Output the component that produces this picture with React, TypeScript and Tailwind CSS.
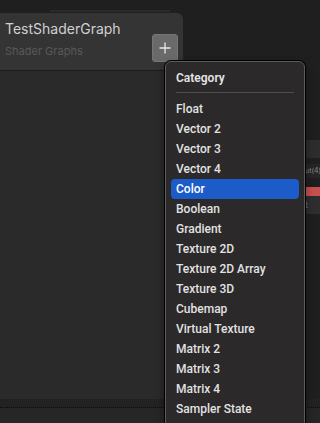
import React from "react";

const items = [
  "Float",
  "Vector 2",
  "Vector 3",
  "Vector 4",
  "Color",
  "Boolean",
  "Gradient",
  "Texture 2D",
  "Texture 2D Array",
  "Texture 3D",
  "Cubemap",
  "Virtual Texture",
  "Matrix 2",
  "Matrix 3",
  "Matrix 4",
  "Sampler State",
];

export default function App() {
  return (
    <div
      className="relative w-[320px] h-[423px] overflow-hidden bg-[#1f1f1f]"
      style={{ fontFamily: "Inter, 'Noto Sans', sans-serif" }}
    >
      {/* top strip */}
      <div className="h-[13px] pt-[10px] pl-[50px]">
        <div className="w-[120px] h-[2px] bg-[#2a2a2a]" />
      </div>

      {/* blackboard panel header */}
      <div className="w-[183px] h-[58px] bg-[#343434] rounded-tr-[6px] border-b border-[#1c1c1c] flex justify-between pl-[5px] pr-[5px]">
        <div className="flex flex-col pt-[6px]">
          <div className="text-[14px] leading-[20px] text-[#d0d0d0]">TestShaderGraph</div>
          <div className="text-[11px] leading-[14px] text-[#595959] mt-[5px]">Shader Graphs</div>
        </div>
        <div className="mt-[21px] w-[26px] h-[28px] rounded-[3px] bg-[#6a6a6a] border border-[#767676] flex items-center justify-center">
          <svg width="12" height="12" viewBox="0 0 12 12">
            <path d="M6 0.5v11M0.5 6h11" stroke="#e8e8e8" strokeWidth="1.3" />
          </svg>
        </div>
      </div>

      {/* blackboard body */}
      <div className="w-[183px] h-[328px] bg-[#2a2a2a]" />
      <div className="w-[320px] h-[9px] bg-[#222222] border-b border-dotted border-[#0c0c0c]" />
      <div className="w-[320px] h-[15px] bg-[#262626]" />

      {/* right-side node fragments on canvas */}
      <div className="absolute left-[305px] top-[140px] w-[15px] flex flex-col">
        <div className="h-[18px] bg-[#2d2d2d]" />
        <div className="h-[6px] bg-[#1f1f1f]" />
        <div className="h-[14px] bg-[#262626] text-[7px] leading-[14px] text-[#8a8a8a] whitespace-nowrap">ut(4)</div>
        <div className="h-[9px] bg-[#1f1f1f]" />
        <div className="h-[9px] bg-[#c85050]" />
        <div className="h-[18px] bg-[#2e2e2e] text-[9px] leading-[18px] text-[#777] whitespace-nowrap">t</div>
      </div>

      {/* dropdown menu */}
      <div
        className="absolute left-[165px] top-[61px] w-[140px] h-[380px] rounded-[6px] bg-[#2b292a] border border-[#5a5a5a] shadow-[0_0_0_1px_#000,0_4px_10px_rgba(0,0,0,0.5)] px-[5px] pt-[6px]"
        style={{ fontFamily: "Roboto, 'Liberation Sans', sans-serif" }}
      >
        <div className="px-[5px] h-[20px] leading-[20px] text-[12px] font-semibold text-[#e4e4e4]">Category</div>
        <div className="mx-[5px] mt-[4px] mb-[6px] h-px bg-[#4f4d4e]" />
        {items.map((it) => (
          <div
            key={it}
            className={
              it === "Color"
                ? "h-[20px] leading-[20px] px-[5px] text-[12px] font-medium text-white bg-[#1b5cc8] rounded-[4px]"
                : "h-[20px] leading-[20px] px-[5px] text-[12px] font-medium text-[#e2e2e2]"
            }
          >
            {it}
          </div>
        ))}
      </div>
    </div>
  );
}
